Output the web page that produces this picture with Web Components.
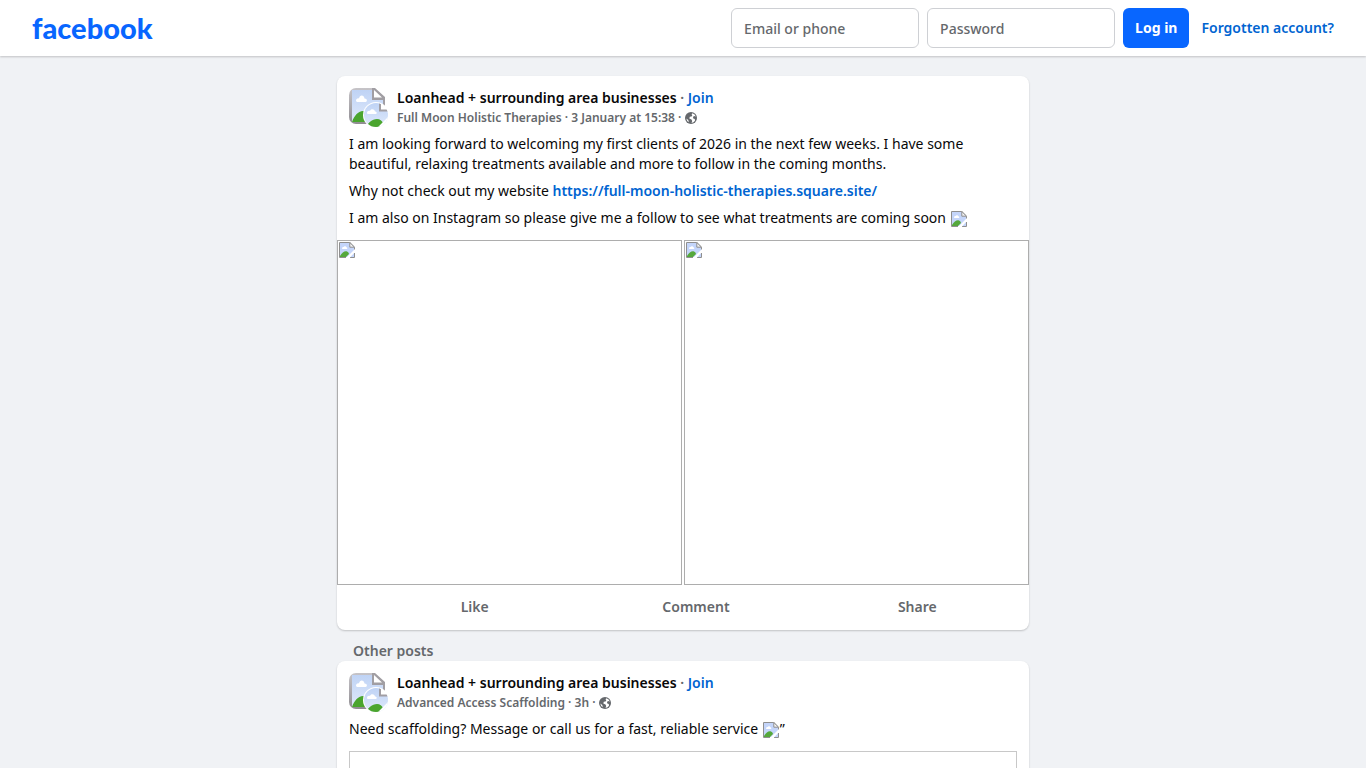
<!DOCTYPE html>
<html lang="en-GB">
<head>
<meta charset="utf-8">
<meta name="viewport" content="width=device-width, initial-scale=1">
<title>Facebook</title>
<style>
  :root {
    --ink: #080809;
    --muted: #65686c;
    --link: #0064d1;
    --accent: #0866ff;
    --line: #ced0d4;
    --page: #f0f2f5;
    --card: #fff;
  }
  body {
    margin: 0;
    background: var(--page);
    color: var(--ink);
    font: 14px/20px "Noto Sans", "Liberation Sans", sans-serif;
  }
  fb-post a { color: var(--link); font-weight: 600; text-decoration: none; }
</style>
</head>
<body>

<fb-header></fb-header>

<fb-feed>
  <fb-post group="Loanhead + surrounding area businesses" author="Full Moon Holistic Therapies" time="3 January at 15:38">
    <p>I am looking forward to welcoming my first clients of 2026 in the next few weeks. I have some beautiful, relaxing treatments available and more to follow in the coming months.</p>
    <p>Why not check out my website <a href="https://full-moon-holistic-therapies.square.site/">https://full-moon-holistic-therapies.square.site/</a></p>
    <p>I am also on Instagram so please give me a follow to see what treatments are coming soon <missing-image></missing-image></p>
    <photo-grid slot="media"><missing-image framed></missing-image><missing-image framed></missing-image></photo-grid>
    <post-actions slot="actions"></post-actions>
  </fb-post>
  <h2 slot="heading">Other posts</h2>
  <fb-post slot="others" group="Loanhead + surrounding area businesses" author="Advanced Access Scaffolding" time="3h">
    <p>Need scaffolding? Message or call us for a fast, reliable service <missing-image></missing-image>”</p>
    <photo-grid slot="media" inset><missing-image framed pending></missing-image></photo-grid>
  </fb-post>
</fb-feed>

<script>
/* ── <missing-image> : torn-page placeholder, inline or framed ── */
const TORN_PAGE = `
  <path fill="#c4d5fa" d="M1 1h10l4 4v10H1z"/>
  <path fill="#fff" d="M3 6.5c0-1 .8-1.6 1.6-1.5C5 3.800 7 3.900 7.300 5.200 8.500 5.200 8.800 7 7.500 7H3.500z"/>
  <path fill="#55a83b" d="M1 15v-1c2-3.500 5-5.500 7-4.500 1.200.6 1.800 1.500 2 2.500l-3 3z"/>
  <path fill="none" stroke="#8f8f8f" d="M7 15.500H.5V.5h10.300l4.700 4.700V8M11 15.500h4.500V11"/>
  <path fill="#f4f4f4" stroke="#8f8f8f" d="M10.800.5v4.700h4.700z"/>
  <path fill="#fff" d="M16 7v3l-5.500 6H7z"/>`;

class MissingImage extends HTMLElement {
  connectedCallback() {
    if (this.shadowRoot) return;
    this.attachShadow({ mode: 'open' }).innerHTML = `
      <style>
        :host { display: inline-block; width: 16px; height: 16px; margin: 0 1px; vertical-align: -4px; }
        svg { display: block; }
        :host([framed]) {
          display: block; box-sizing: border-box; width: auto; height: auto; margin: 0; padding: 1px;
          aspect-ratio: 1; border: 1px solid #adadad;
        }
        :host([pending]) { border-color: #c8c8c8; }
        :host([pending]) svg { display: none; }
      </style>
      <svg width="16" height="16" viewBox="0 0 16 16" aria-hidden="true">${TORN_PAGE}</svg>
    `;
  }
}

/* ── <post-avatar> : group picture with the author's on its corner ── */
class PostAvatar extends HTMLElement {
  connectedCallback() {
    if (this.shadowRoot) return;
    this.attachShadow({ mode: 'open' }).innerHTML = `
      <style>
        :host { display: block; flex: none; width: 40px; height: 40px; }
        svg { display: block; }
      </style>
      <svg width="40" height="40" viewBox="0 0 40 40" aria-hidden="true">
        <defs>
          <clipPath id="group"><rect width="36" height="36" rx="7"/></clipPath>
          <clipPath id="author"><circle cx="27" cy="27" r="12"/></clipPath>
          <linearGradient id="sky" x1="0" y1="0" x2="0" y2="1">
            <stop offset="0" stop-color="#bfd3f5"/><stop offset="1" stop-color="#dfe9fb"/>
          </linearGradient>
          <linearGradient id="edge" x1="0" y1="0" x2="0" y2="1">
            <stop offset="0" stop-color="#c6c4c8"/><stop offset="1" stop-color="#8f8c91"/>
          </linearGradient>
        </defs>
        <g clip-path="url(#group)">
          <path fill="url(#edge)" d="M0 0h25l11 11v25H0z"/>
          <path fill="url(#sky)" d="M3 2h21v10h10v22H3z"/>
          <path fill="#fff" d="M7 13c0-2 1.500-3 3-2.500C10.500 6.500 15 6.500 15.500 10.500c3 0 3 3.500 1 3.500H8z"/>
          <path fill="#4aa52e" d="M3 34c2-6 6-11 11-11 3 0 5 4 5 11z"/>
          <path fill="#a19ea3" d="M23 0h3l10 9v11h-2v-8H23z"/>
          <path fill="#fff" d="M25 2l8 7.500h-8zM28 0h8v8z"/>
        </g>
        <circle cx="27" cy="27" r="13" fill="#fff"/>
        <g clip-path="url(#author)">
          <path fill="url(#sky)" d="M15 15h16v8h8v16H15z"/>
          <path fill="#fff" d="M18 25c0-1.500 1.500-2.500 3-2 .5-2.500 4.500-2.500 5 .5 2 0 2.500 2.500.5 2.500h-8z"/>
          <path fill="#4aa52e" d="M17 39c2-4 6-8 11-8 3 0 5 2 6 4l-5 5z"/>
          <path fill="#fff" d="M39 26v3L28 40h11z"/>
          <path fill="none" stroke="#a19ea3" stroke-width="2" d="M31 15v7.500h8"/>
        </g>
      </svg>
    `;
  }
}

/* ── <fb-header> : wordmark and login form ── */
class FbHeader extends HTMLElement {
  connectedCallback() {
    if (this.shadowRoot) return;
    this.attachShadow({ mode: 'open' }).innerHTML = `
      <style>
        :host {
          display: flex; align-items: center; justify-content: space-between; box-sizing: border-box;
          height: 56px; padding: 0 32px; background: var(--card); box-shadow: 0 1px 2px rgba(0, 0, 0, .2);
        }
        a { text-decoration: none; }
        .brand { color: var(--accent); font: 900 29px/40px Lato, sans-serif; }
        form { display: flex; align-items: center; gap: 8px; }
        input {
          box-sizing: border-box; width: 188px; height: 40px; padding: 0 12px;
          border: 1px solid var(--line); border-radius: 6px; background: #fff; color: var(--ink);
          font: inherit; font-weight: 500;
        }
        input::placeholder { color: var(--muted); opacity: 1; }
        button {
          height: 40px; padding: 0 12px; border: 0; border-radius: 6px;
          background: var(--accent); color: #fff; font: inherit; font-weight: 700; cursor: pointer;
        }
        .forgot { margin-left: 4px; color: var(--link); font-weight: 600; }
      </style>
      <a class="brand" href="#">facebook</a>
      <form>
        <input type="text" name="email" placeholder="Email or phone" aria-label="Email or phone">
        <input type="password" name="pass" placeholder="Password" aria-label="Password">
        <button type="button">Log in</button>
        <a class="forgot" href="#">Forgotten account?</a>
      </form>
    `;
  }
}

/* ── <fb-feed> : the centred column ── */
class FbFeed extends HTMLElement {
  connectedCallback() {
    if (this.shadowRoot) return;
    this.attachShadow({ mode: 'open' }).innerHTML = `
      <style>
        :host { display: block; max-width: 692px; margin: 20px auto 0; }
        ::slotted(h2) { margin: 11px 16px 0; color: var(--muted); font-size: 14px; font-weight: 600; line-height: 20px; }
      </style>
      <main>
        <slot></slot>
        <slot name="heading"></slot>
        <slot name="others"></slot>
      </main>
    `;
  }
}

/* ── <fb-post> : one card ── */
class FbPost extends HTMLElement {
  connectedCallback() {
    if (this.shadowRoot) return;
    this.attachShadow({ mode: 'open' }).innerHTML = `
      <style>
        :host { display: block; border-radius: 8px; background: var(--card); box-shadow: 0 1px 2px rgba(0, 0, 0, .2); }
        header { display: flex; gap: 8px; padding: 12px 12px 0; }
        h3, .meta { margin: 0; }
        h3 { font-size: 14px; font-weight: 600; line-height: 20px; }
        h3 a { color: inherit; text-decoration: none; }
        h3 .join { color: var(--link); }
        h3 span, .meta { color: var(--muted); }
        .meta { display: flex; align-items: center; gap: 4px; font-size: 12px; font-weight: 600; line-height: 20px; }
        .text { display: flex; flex-direction: column; gap: 7px; padding: 6px 12px 12px; }
        ::slotted(p) { margin: 0; }
      </style>
      <article>
        <header>
          <post-avatar></post-avatar>
          <div>
            <h3><a class="group" href="#"></a> <span>·</span> <a class="join" href="#">Join</a></h3>
            <p class="meta"><span class="byline"></span>
              <svg width="12" height="12" viewBox="0 0 12 12" role="img" aria-label="Public">
                <circle cx="6" cy="6" r="6" fill="#65686c"/>
                <path fill="#fff" d="M7.500 1.300A5 5 0 0 1 10.800 4.500L9 4 8 5l.3 1.500L9.800 7l.2 1.800A5 5 0 0 1 6.500 11L7.200 9 6.500 7.500 4.300 6.500 4.800 4.800 6.500 4.500 7.300 3.200 6.500 2.200zM1.300 6.500l2 1.500.5 2.200A5 5 0 0 1 1.300 6.500z"/>
              </svg>
            </p>
          </div>
        </header>
        <div class="text"><slot></slot></div>
        <slot name="media"></slot>
        <slot name="actions"></slot>
      </article>
    `;
    this.shadowRoot.querySelector('.group').textContent = this.getAttribute('group');
    this.shadowRoot.querySelector('.byline').textContent =
      `${this.getAttribute('author')} · ${this.getAttribute('time')} ·`;
  }
}

/* ── <photo-grid> : pictures side by side ── */
class PhotoGrid extends HTMLElement {
  connectedCallback() {
    if (this.shadowRoot) return;
    this.attachShadow({ mode: 'open' }).innerHTML = `
      <style>
        :host { display: grid; grid-auto-flow: column; grid-auto-columns: 1fr; gap: 2px; }
        :host([inset]) { margin: 0 12px; }
      </style>
      <slot></slot>
    `;
  }
}

/* ── <post-actions> : Like / Comment / Share ── */
class PostActions extends HTMLElement {
  connectedCallback() {
    if (this.shadowRoot) return;
    this.attachShadow({ mode: 'open' }).innerHTML = `
      <style>
        :host { display: grid; grid-template-columns: repeat(3, 1fr); padding: 6px 14px 7px; }
        button {
          height: 32px; padding: 0 0 0 26px; border: 0; border-radius: 4px; background: none;
          color: var(--muted); font: inherit; font-weight: 600; cursor: pointer;
        }
      </style>
      <button type="button">Like</button>
      <button type="button">Comment</button>
      <button type="button">Share</button>
    `;
  }
}

customElements.define('missing-image', MissingImage);
customElements.define('post-avatar', PostAvatar);
customElements.define('fb-header', FbHeader);
customElements.define('fb-feed', FbFeed);
customElements.define('photo-grid', PhotoGrid);
customElements.define('post-actions', PostActions);
customElements.define('fb-post', FbPost);
</script>
</body>
</html>
